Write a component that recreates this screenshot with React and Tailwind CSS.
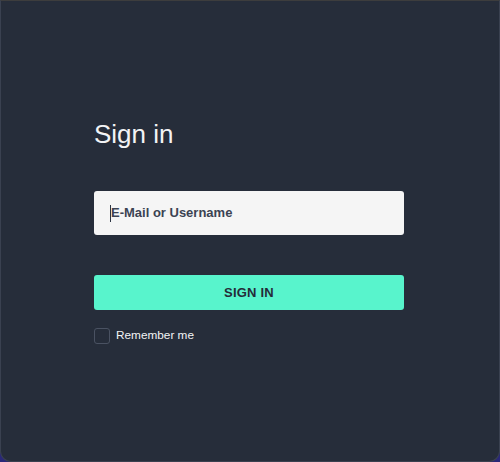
import React from 'react';

const App = () => (
  <div className="w-[500px] h-[462px] bg-[#2a2878]" style={{ fontFamily: '"Liberation Sans", Arial, sans-serif' }}>
    <div className="w-full h-full bg-[#262d3a] border border-[#3a4150] border-t-[#3d3d3d] rounded-b-[11px] pt-[118px] pl-[93px]">
      <h1 className="text-[26px] leading-[30px] font-normal text-[#f2f3f5]">Sign in</h1>

      <div className="mt-[42px] w-[310px] h-[44px] bg-[#f5f5f5] rounded-[3px] flex items-center pl-4 pr-4">
        <span className="w-px h-[17px] bg-[#2d3543]" />
        <input
          className="flex-1 bg-transparent outline-none text-[13px] font-bold text-[#2d3543] placeholder:text-[#3b4352] caret-transparent"
          placeholder="E-Mail or Username"
        />
      </div>

      <button className="mt-[40px] w-[310px] h-[35px] pt-px bg-[#58f4cc] rounded-[3px] text-[13px] font-bold text-[#252c38] tracking-[0.2px]">
        SIGN IN
      </button>

      <label className="mt-[17px] flex items-center gap-[6px]">
        <span className="w-4 h-4 rounded-[3px] border border-[#4a5262]" />
        <span className="text-[11.8px] text-[#f2f3f5]">Remember me</span>
      </label>
    </div>
  </div>
);

export default App;
